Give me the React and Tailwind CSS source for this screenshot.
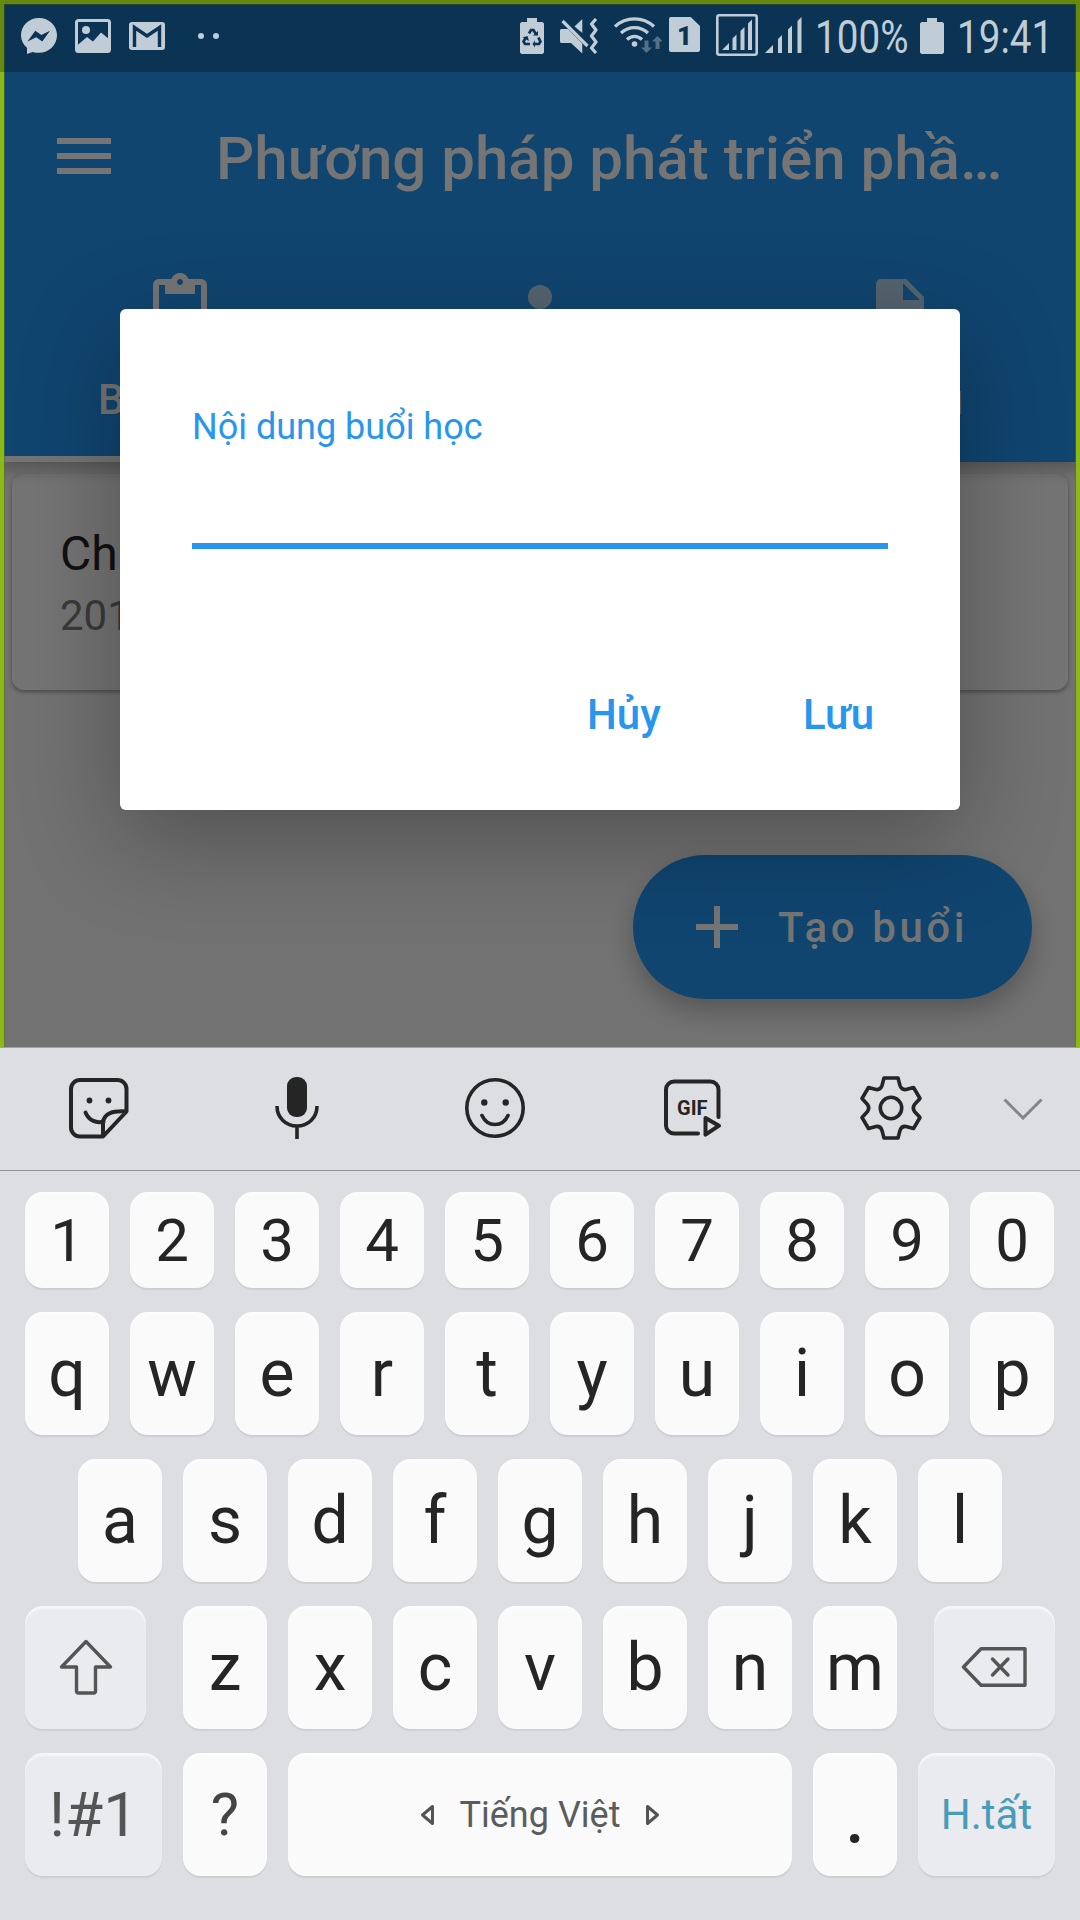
import React from "react";

const INK = "#252525";

function StatusBar() {
  return (
    <div className="relative z-20 flex h-[72px] w-full shrink-0 items-start bg-black/26 text-[#c0ccd6]">
      <svg className="ml-[21px] mt-[18px] h-[36px] w-[36px]" viewBox="0 0 36 36">
        <path fill="#c0ccd6" d="M18 0C8 0 0 7.600 0 17.300c0 5.200 2.300 9.400 6 12.500v6.200l5.600-2.100c2 .6 4.100.9 6.400.9 10 0 18-7.800 18-17.500S28 0 18 0z" />
        <path fill="#0c3353" d="M6.500 23.500 14.300 12.800l6 4.300 8.700-4.300L21.300 23.500l-6-4.300z" />
      </svg>
      <svg className="ml-[18px] mt-[19px] h-[34px] w-[36px]" viewBox="0 0 36 34">
        <rect x="1.500" y="1.500" width="33" height="31" rx="2" fill="none" stroke="#c0ccd6" strokeWidth="3" />
        <circle cx="11" cy="11" r="4" fill="#c0ccd6" />
        <path fill="#c0ccd6" d="M2 26.500 12 18l6 4.500 8-9 8 6.500v12H2z" />
      </svg>
      <svg className="ml-[18px] mt-[22px] h-[28px] w-[36px]" viewBox="0 0 36 28">
        <rect width="36" height="28" rx="3" fill="#c0ccd6" />
        <path fill="none" stroke="#0c3353" strokeWidth="3.400" d="M5.500 25V5.500L18 14 30.500 5.500V25" />
      </svg>
      <div className="ml-[33px] mt-[33px] flex gap-[9px]">
        <span className="size-[6px] rounded-full bg-[#c0ccd6]" />
        <span className="size-[6px] rounded-full bg-[#c0ccd6]" />
      </div>

      <svg className="ml-auto mt-[18px] h-[36px] w-[24px]" viewBox="0 0 24 36">
        <path fill="#c0ccd6" d="M7 0h10v4h5.500L24 5.500v29L22.500 36h-21L0 34.500v-29L1.500 4H7z" />
        <g fill="none" stroke="#0c3353" strokeWidth="2.600">
          <path d="M9 15.500 11 12h2.500l2.200 3.800" />
          <path d="M18.300 19.500 20.500 23.500 19 26h-5" />
          <path d="M10 26H5l-1.500-2.500L6 19.500" />
        </g>
        <path fill="#0c3353" d="M13 17.500h5V13zM15 22.500v7L12.500 26zM2.500 19.500l5-1.500 1.500 5z" />
      </svg>
      <svg className="ml-[16px] mt-[18px] h-[36px] w-[38px]" viewBox="0 0 38 36">
        <path fill="#c0ccd6" d="M1 11h7l14.300 14.500V35.500L11 25H1l-1-1V12zM14.500 8.500 22.300 1v14z" />
        <path stroke="#c0ccd6" strokeWidth="3.200" d="m2.500 3 25 25" />
        <path fill="none" stroke="#c0ccd6" strokeWidth="3.200" strokeLinejoin="round" d="m36 1-4.500 5 4.500 6-4.500 6 4.500 6-4.500 6 4.500 5" />
      </svg>
      <svg className="ml-[16px] mt-[17px] h-[36px] w-[48px]" viewBox="0 0 48 36">
        <g fill="none" stroke="#c0ccd6" strokeWidth="3.300">
          <path d="M1 9.500C12-.7 29-.7 40 9.500" />
          <path d="M7 16c8-7.200 19-7.200 27 0" />
          <path d="M13 22.500c4.500-4.300 10.500-4.300 15 0" />
        </g>
        <circle cx="20.500" cy="27" r="2.800" fill="#c0ccd6" />
        <path fill="#557085" d="M30.500 23.500h4v7h3.500L32.500 36l-5.500-5.500h3.500zM41.500 32h4v-7.500H49L43.500 19 38 24.500h3.500z" />
      </svg>
      <div className="ml-[7px] mt-[17px] flex h-[35px] w-[31px] items-center justify-center rounded-[2px] bg-[#c0ccd6] pt-[2px] text-[26px] leading-none font-black text-[#0c3353] [clip-path:polygon(0_0,70%_0,100%_26%,100%_100%,0_100%)]">
        1
      </div>
      <svg className="ml-[16px] mt-[14px] h-[42px] w-[42px]" viewBox="0 0 42 42">
        <rect x="1.300" y="1.300" width="39.400" height="39.400" rx="2" fill="none" stroke="#c0ccd6" strokeWidth="2.600" />
        <path fill="#c0ccd6" d="M6 36l7-7v7zM16.500 24.500l4-4V36h-4zM24.500 17l4-4v23h-4zM32 9.500l4-4V36h-4z" />
      </svg>
      <svg className="ml-[7px] mt-[17px] h-[36px] w-[37px]" viewBox="0 0 37 36">
        <path fill="#c0ccd6" d="M0 36l8-8v8zM13 22l4-4v18h-4zM23 12.500l4-4V36h-4zM32.500 4 36.500 0v36h-4z" />
      </svg>
      <div className="ml-[13px] mt-[9px] w-[93px] whitespace-nowrap">
        <span className="inline-block origin-left scale-x-[0.84] text-[46px] leading-[56px]">100%</span>
      </div>
      <svg className="ml-[12px] mt-[18px] h-[36px] w-[24px]" viewBox="0 0 24 36">
        <path fill="#c0ccd6" d="M7 0h10v4h5.500L24 5.500v29L22.500 36h-21L0 34.500v-29L1.500 4H7z" />
      </svg>
      <div className="mr-[27px] ml-[13px] mt-[9px] w-[96px] whitespace-nowrap">
        <span className="inline-block origin-left scale-x-[0.84] text-[46px] leading-[56px]">19:41</span>
      </div>
    </div>
  );
}

function AppBar() {
  return (
    <div className="flex h-[168px] items-center text-[#757575]">
      <div className="ml-[57px] flex w-[54px] flex-col gap-[9px]">
        <span className="h-[6px] bg-[#757575]" />
        <span className="h-[6px] bg-[#757575]" />
        <span className="h-[6px] bg-[#757575]" />
      </div>
      <h1 className="ml-[105px] mt-[5px] text-[60px] leading-[72px] font-medium whitespace-nowrap">
        Phương pháp phát triển phầ…
      </h1>
    </div>
  );
}

function Tabs() {
  return (
    <div className="grid h-[222px] grid-cols-3 text-[42px] leading-[48px] font-medium">
      <div className="flex flex-col items-center border-b-[6px] border-[#757575] pt-[30px] text-[#757575]">
        <svg className="size-[72px]" viewBox="0 0 24 24" fill="#757575">
          <path d="M19 3h-4.180C14.400 1.840 13.300 1 12 1s-2.400.84-2.820 2H5c-1.100 0-2 .9-2 2v14c0 1.100.9 2 2 2h14c1.100 0 2-.9 2-2V5c0-1.100-.9-2-2-2zm-7 0c.55 0 1 .45 1 1s-.45 1-1 1-1-.45-1-1 .45-1 1-1zm7 16H5V5h2v3h10V5h2v14z" />
        </svg>
        <span className="mt-[34px] w-[164px]">Buổi</span>
      </div>
      <div className="flex flex-col items-center pt-[30px] text-[#54646f]">
        <svg className="size-[72px]" viewBox="0 0 24 24" fill="#54646f">
          <circle cx="12" cy="9" r="4" />
        </svg>
      </div>
      <div className="flex flex-col items-center pt-[30px] text-[#54646f]">
        <svg className="size-[72px]" viewBox="0 0 24 24" fill="#54646f">
          <path d="M5.600 3A1.600 1.600 0 0 0 4 4.600V21a2 2 0 0 0 2 2h12a2 2 0 0 0 2-2V9l-5.900-6zM13 10V4.400L18.600 10z" />
        </svg>
        <span className="mt-[34px] mr-[7px]">Tài liệu</span>
      </div>
    </div>
  );
}

function Dialog() {
  return (
    <div className="absolute top-[309px] left-[120px] flex h-[501px] w-[840px] flex-col rounded-[6px] bg-white px-[72px] pt-[97px] text-[#2895ee] shadow-[0_28px_100px_0px_rgba(0,0,0,0.3)]">
      <label className="text-[36px] leading-[42px]">Nội dung buổi học</label>
      <div className="mt-[95px] h-[6px] bg-[#2895ee]" />
      <div className="mt-[142px] flex text-[42px] leading-[48px] font-medium">
        <span className="ml-[395px]">Hủy</span>
        <span className="ml-auto mr-[14px]">Lưu</span>
      </div>
    </div>
  );
}

function AddButton() {
  return (
    <div className="absolute top-[855px] right-[48px] flex h-[144px] w-[399px] items-center rounded-full bg-[#104570] text-[#757575] shadow-[0_12px_24px_0px_rgba(0,0,0,0.24)]">
      <svg className="ml-[63px] size-[42px]" viewBox="0 0 42 42">
        <path stroke="#757575" strokeWidth="6" d="M21 0v42M0 21h42" />
      </svg>
      <span className="ml-[40px] mt-[2px] text-[42px] leading-[48px] font-medium tracking-[3.600px] whitespace-nowrap">Tạo buổi</span>
    </div>
  );
}

function Screen() {
  return (
    <div className="relative flex h-[1047px] flex-col overflow-hidden bg-[#727272]">
      <header className="absolute inset-x-0 top-0 z-0 h-[462px] bg-[#104570] shadow-[0_8px_14px_rgba(0,0,0,0.25)]">
        <div className="h-[72px]" />
        <AppBar />
        <Tabs />
      </header>
      <StatusBar />
      <div className="mx-[12px] mt-[402px] flex h-[216px] flex-col rounded-[12px] bg-[#747474] pt-[52px] pl-[48px] shadow-[0_2px_4px_rgba(0,0,0,0.35)]">
        <span className="text-[48px] leading-[56px] text-[#111111]">Chương 1</span>
        <span className="mt-[10px] text-[42px] leading-[48px] text-[#3a3a3a]">2019</span>
      </div>
      <AddButton />
      <Dialog />
      <div className="pointer-events-none absolute inset-x-0 top-0 z-10 h-[1100px] border-[4px] border-[#8bb916] shadow-[inset_0_0_1px_1px_rgba(80,120,40,0.6)]" />
    </div>
  );
}

function Toolbar() {
  return (
    <div className="flex h-[124px] items-center border-t border-b border-t-[#a0a0a2] border-b-[#909194] [&>div]:mb-[2px] [&>div]:flex [&>div]:w-[198px] [&>div]:justify-center">
      <div>
        <svg className="size-[64px]" viewBox="0 0 64 64" fill="none" stroke={INK} strokeWidth="4" strokeLinejoin="round">
          <path d="M59.500 35.500V13a9 9 0 0 0-9-9h-37.500a9 9 0 0 0-9 9v38.500a9 9 0 0 0 9 9H36L59.500 35.500c-15-1-21 2-23.500 9.500V60" />
          <path strokeLinecap="round" d="M18.500 36.500C22 45 30 47.500 36.500 45.500" />
          <circle cx="22.500" cy="24.500" r="2.900" fill={INK} stroke="none" />
          <circle cx="41.500" cy="24.500" r="2.900" fill={INK} stroke="none" />
        </svg>
      </div>
      <div>
        <svg className="h-[64px] w-[46px]" viewBox="0 0 46 64" fill="none" stroke={INK} strokeWidth="3.600">
          <rect x="13" y="1" width="20" height="40" rx="9" fill={INK} stroke="none" />
          <path d="M3 30c0 12 9 20 20 20s20-8 20-20M23 50v13" />
        </svg>
      </div>
      <div>
        <svg className="size-[64px]" viewBox="0 0 64 64" fill="none" stroke={INK} strokeWidth="3.600">
          <circle cx="32" cy="32" r="28.200" />
          <path strokeLinecap="round" d="M19 39.500c5.500 12 20.500 12 26 0" />
          <circle cx="21.300" cy="26.500" r="3.200" fill={INK} stroke="none" />
          <circle cx="42.700" cy="26.500" r="3.200" fill={INK} stroke="none" />
        </svg>
      </div>
      <div>
        <div className="relative size-[64px]">
          <svg className="size-[64px]" viewBox="0 0 64 64" fill="none" stroke={INK} strokeWidth="4" strokeLinecap="round" strokeLinejoin="round">
            <path d="M57.500 41V13.500a8 8 0 0 0-8-8h-36.500a8 8 0 0 0-8 8v36a8 8 0 0 0 8 8h24M44.500 42 58 49.700l-13.500 9z" />
          </svg>
          <span className="absolute top-[20px] left-[16px] text-[20px] leading-[24px] font-bold text-[#252525]">GIF</span>
        </div>
      </div>
      <div>
        <svg className="size-[68px]" viewBox="-34 -34 68 68" fill="none" stroke={INK} strokeWidth="3.600" strokeLinejoin="round">
          <path d="M-7-30H7L9-22.500Q10.500-17.800 15-18.500L22.500-20.500 29-9.500 23.500-3.500Q21 0 23.500 3.500L29 9.500 22.500 20.500 15 18.500Q10.500 17.800 9 22.500L7 30H-7L-9 22.500Q-10.500 17.800-15 18.500L-22.500 20.500-29 9.500-23.500 3.500Q-21 0-23.500-3.500L-29-9.500-22.500-20.500-15-18.500Q-10.500-17.800-9-22.500Z" />
          <circle r="10.700" />
        </svg>
      </div>
      <svg className="ml-[13px] h-[22px] w-[40px]" viewBox="0 0 40 22">
        <path fill="none" stroke="#858585" strokeWidth="3" d="M1.500 1.500 20 20 38.500 1.500" />
      </svg>
    </div>
  );
}

function Key({ children, className = "w-[84px] bg-[#fafafa] text-[66px] text-[#252525]" }) {
  return (
    <div
      className={
        "flex h-full shrink-0 items-center justify-center rounded-[18px] shadow-[0_2px_1px_rgba(0,0,0,0.07),inset_0_3px_2px_rgba(255,255,255,0.55)] " +
        className
      }
    >
      {children}
    </div>
  );
}

function Keyboard() {
  return (
    <div className="flex h-[873px] flex-col bg-[#dddee2] leading-none">
      <Toolbar />
      <div className="flex flex-col gap-[24px] px-[25px] pt-[21px]">
        <div className="flex h-[96px] gap-[21px]">
          {"1234567890".split("").map((k) => (
            <Key key={k} className="w-[84px] bg-[#fafafa] pt-[1px] text-[60px] text-[#252525]">{k}</Key>
          ))}
        </div>
        <div className="flex h-[123px] gap-[21px]">
          {"qwertyuiop".split("").map((k) => <Key key={k}>{k}</Key>)}
        </div>
        <div className="flex h-[123px] justify-center gap-[21px]">
          {"asdfghjkl".split("").map((k) => <Key key={k}>{k}</Key>)}
        </div>
        <div className="flex h-[123px] justify-between">
          <Key className="w-[121px] bg-[#e9ebee] pb-[2px]">
            <svg className="h-[56px] w-[54px]" viewBox="0 0 54 56" fill="none" stroke="#555555" strokeWidth="3.400" strokeLinejoin="round">
              <path d="M27 2.500 51.500 28H36.500V52a2 2 0 0 1-2 2h-15a2 2 0 0 1-2-2V28H2.500z" />
            </svg>
          </Key>
          <div className="flex gap-[21px]">
            {"zxcvbnm".split("").map((k) => <Key key={k}>{k}</Key>)}
          </div>
          <Key className="w-[121px] bg-[#e9ebee] pr-[2px] pb-[2px]">
            <svg className="h-[40px] w-[66px]" viewBox="0 0 66 40" fill="none" stroke="#555555" strokeWidth="3.400" strokeLinejoin="round">
              <path d="M2.500 20 20 1.800h44v36.400H20z" />
              <path strokeLinecap="round" d="m31.500 12 15.500 16M47 12 31.500 28" />
            </svg>
          </Key>
        </div>
        <div className="flex h-[123px] gap-[21px]">
          <Key className="w-[137px] bg-[#e9ebee] text-[62px] text-[#555555]">!#1</Key>
          <Key className="w-[84px] bg-[#fafafa] text-[60px] text-[#444444]">?</Key>
          <Key className="w-[504px] bg-[#fafafa] text-[36px] text-[#5c5c5c]">
            <svg className="mr-[25px] h-[22px] w-[15px]" viewBox="0 0 15 22" fill="none" stroke="#555555" strokeWidth="3" strokeLinejoin="round">
              <path d="M12.500 2.500v17L2.500 11z" />
            </svg>
            Tiếng Việt
            <svg className="ml-[25px] h-[22px] w-[15px]" viewBox="0 0 15 22" fill="none" stroke="#555555" strokeWidth="3" strokeLinejoin="round">
              <path d="M2.500 2.500v17l10-8.500z" />
            </svg>
          </Key>
          <Key className="w-[84px] bg-[#fafafa] text-[84px] text-[#252525]">.</Key>
          <Key className="w-[137px] bg-[#e9ebee] text-[42px] text-[#4a9bba]">H.tất</Key>
        </div>
      </div>
    </div>
  );
}

export default function App() {
  return (
    <div className="h-[1920px] w-[1080px] overflow-hidden font-['Roboto',sans-serif]">
      <Screen />
      <Keyboard />
    </div>
  );
}
